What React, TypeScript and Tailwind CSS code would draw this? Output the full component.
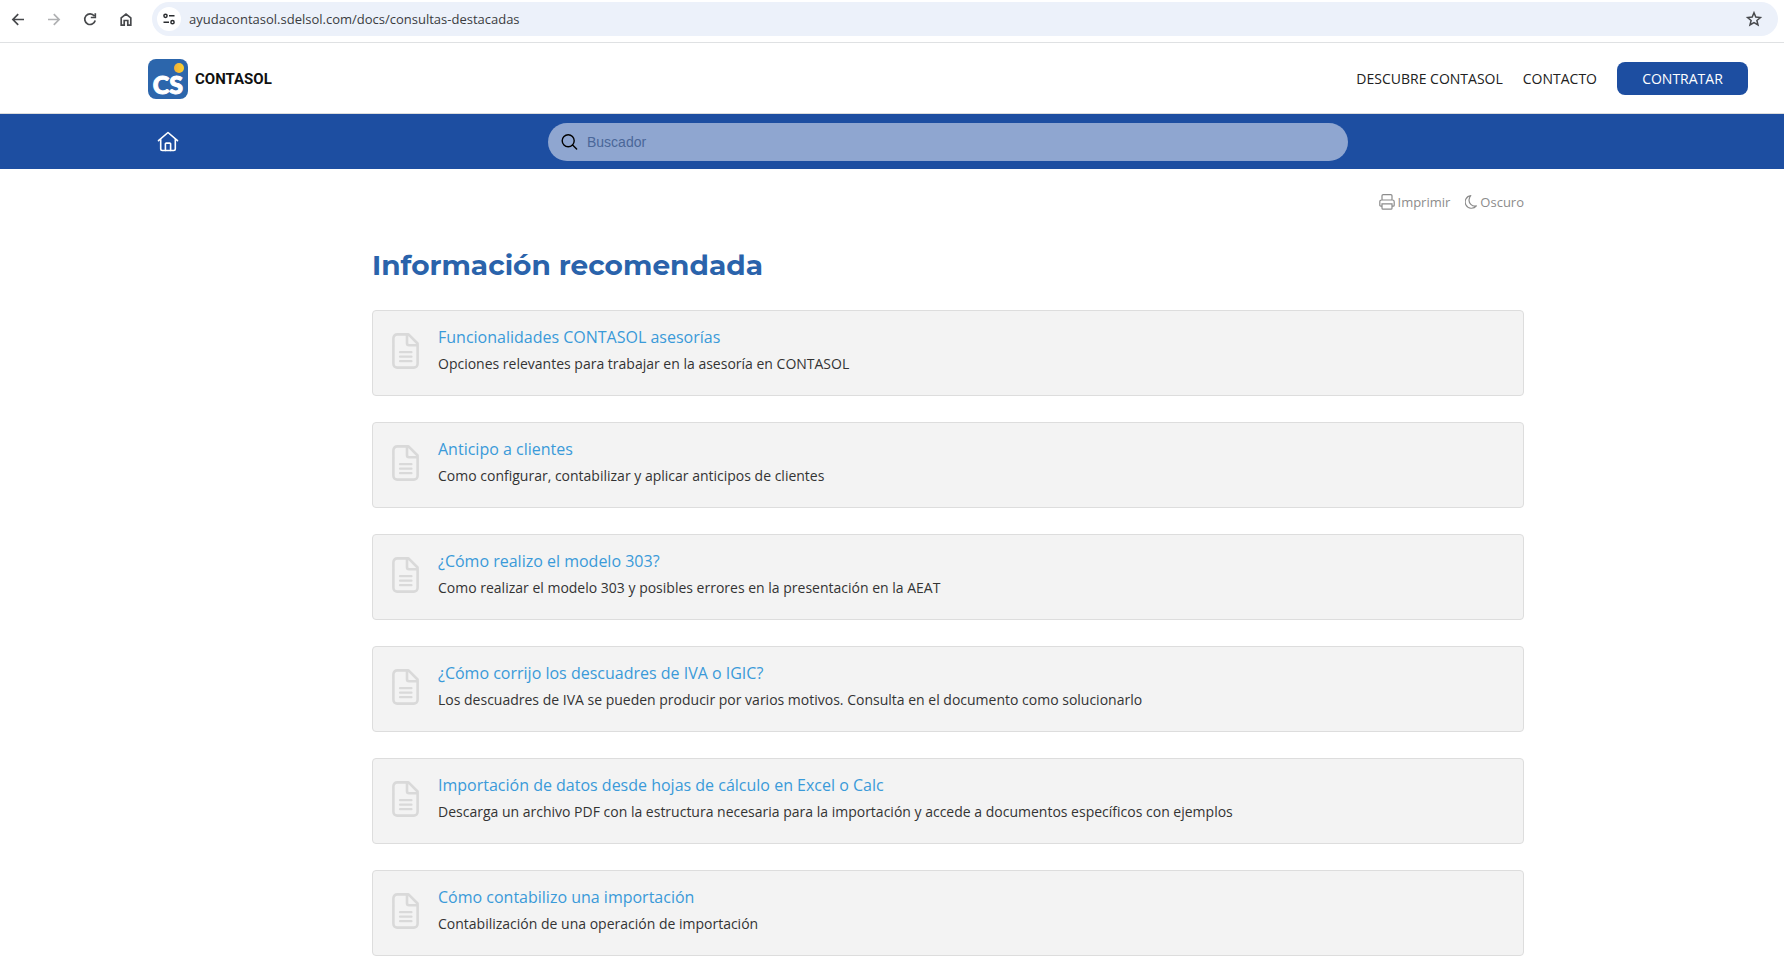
import React from "react";

interface DocItem {
  title: string;
  description: string;
}

const docs: DocItem[] = [
  {
    title: "Funcionalidades CONTASOL asesorías",
    description: "Opciones relevantes para trabajar en la asesoría en CONTASOL",
  },
  {
    title: "Anticipo a clientes",
    description: "Como configurar, contabilizar y aplicar anticipos de clientes",
  },
  {
    title: "¿Cómo realizo el modelo 303?",
    description: "Como realizar el modelo 303 y posibles errores en la presentación en la AEAT",
  },
  {
    title: "¿Cómo corrijo los descuadres de IVA o IGIC?",
    description:
      "Los descuadres de IVA se pueden producir por varios motivos. Consulta en el documento como solucionarlo",
  },
  {
    title: "Importación de datos desde hojas de cálculo en Excel o Calc",
    description:
      "Descarga un archivo PDF con la estructura necesaria para la importación y accede a documentos específicos con ejemplos",
  },
  {
    title: "Cómo contabilizo una importación",
    description: "Contabilización de una operación de importación",
  },
];

const BrowserBar: React.FC = () => {
  return (
    <div className="flex items-center border-b border-[#dfe1e3] pt-[2px] pb-[6px] pl-[9px] pr-[6px] text-[#47494c]">
      <div className="flex items-center gap-[18px] pr-[17px]">
        <button aria-label="Atrás">
          <svg width="18" height="18" viewBox="0 0 18 18" fill="none" stroke="currentColor" strokeWidth="1.7">
            <path d="M15 9.500H4M9.200 4.200 3.900 9.500l5.300 5.300" />
          </svg>
        </button>
        <button aria-label="Adelante" className="text-[#b0b1b3]">
          <svg width="18" height="18" viewBox="0 0 18 18" fill="none" stroke="currentColor" strokeWidth="1.7">
            <path d="M3 9.500h11M8.800 4.200l5.300 5.300-5.300 5.300" />
          </svg>
        </button>
        <button aria-label="Recargar">
          <svg width="18" height="18" viewBox="0 0 18 18" fill="none" stroke="currentColor" strokeWidth="1.7">
            <path d="M13.300 6A5.300 5.300 0 1 0 14.200 10.500M14.300 3.300V7.500H9.800" />
          </svg>
        </button>
        <button aria-label="Inicio">
          <svg width="18" height="18" viewBox="0 0 18 18" fill="none" stroke="currentColor" strokeWidth="1.7">
            <path d="M4.200 7.800 9 4.100l4.800 3.700v7.400h-3v-4.700H7.200v4.700h-3Z" />
          </svg>
        </button>
      </div>
      <div className="flex h-[34px] flex-1 items-center gap-2 rounded-full bg-[#ecf1fa] pl-[5px] pr-[15px]">
        <button
          aria-label="Información del sitio"
          className="flex size-6 items-center justify-center rounded-full bg-white text-[#2a2c2f]"
        >
          <svg width="14" height="14" viewBox="0 0 14 14" fill="none" stroke="currentColor" strokeWidth="1.5">
            <circle cx="3.500" cy="3.800" r="1.600" />
            <path d="M7 3.800h5.500M1.500 10.200h5.500" />
            <circle cx="10.500" cy="10.200" r="1.600" />
          </svg>
        </button>
        <input
          type="text"
          aria-label="Dirección"
          defaultValue="ayudacontasol.sdelsol.com/docs/consultas-destacadas"
          className="flex-1 bg-transparent pt-px font-['Open_Sans',sans-serif] text-[13px] text-[#3a3c3f] outline-none"
        />
        <button aria-label="Añadir a marcadores">
          <svg width="18" height="18" viewBox="0 0 18 18" fill="none" stroke="currentColor" strokeWidth="1.5">
            <path d="m9 2.800 1.800 4.300 4.600.4-3.500 3 1.100 4.500L9 12.600 5 15l1.100-4.500-3.500-3 4.600-.4Z" />
          </svg>
        </button>
      </div>
    </div>
  );
};

const Header: React.FC = () => {
  return (
    <header className="flex h-[71px] items-center justify-between border-b border-[#dcdcdc] pt-px pl-[148px] pr-9">
      <a href="#" className="flex items-center gap-[7px]">
        <span className="relative flex size-10 items-end justify-center rounded-lg bg-[#2c66ac]">
          <span className="font-['Lato',sans-serif] text-[25px] leading-[30px] font-black text-white [-webkit-text-stroke:1px_white]">
            CS
          </span>
          <span className="absolute top-1 right-1 size-[10px] rounded-full bg-gradient-to-r from-[#f0ae38] to-[#fad02f]" />
        </span>
        <span className="pt-[2px] font-['Roboto',sans-serif] text-[15px] font-bold text-[#111111]">CONTASOL</span>
      </a>
      <nav className="flex items-center gap-5 text-sm text-[#212121]">
        <a href="#">DESCUBRE CONTASOL</a>
        <a href="#">CONTACTO</a>
        <a
          href="#"
          className="flex h-[33px] w-[131px] items-center justify-center rounded-lg bg-[#1d4ea1] font-medium text-white"
        >
          CONTRATAR
        </a>
      </nav>
    </header>
  );
};

const SearchBar: React.FC = () => {
  return (
    <div className="grid h-[55px] grid-cols-[1fr_800px_1fr] items-center bg-[#1d4ea1] pl-[148px] pr-9">
      <a href="#" aria-label="Inicio" className="justify-self-start pl-[9px] text-white">
        <svg width="22" height="22" viewBox="0 0 22 22" fill="none" stroke="currentColor" strokeWidth="1.6" strokeLinejoin="round" strokeLinecap="round">
          <path d="M1.500 9.700 11 1.500l9.500 8.200M3.700 8.500v9.300a1.700 1.700 0 0 0 1.700 1.700h11.200a1.700 1.700 0 0 0 1.700-1.700V8.500" />
          <path d="M8.400 19.500V13a.9.9 0 0 1 .9-.9h3.400a.9.9 0 0 1 .9.9v6.500" />
        </svg>
      </a>
      <label className="flex h-[38px] items-center gap-[9px] rounded-full bg-[#8fa6d0] px-[13px] text-black">
        <svg width="17" height="17" viewBox="0 0 17 17" fill="none" stroke="currentColor" strokeWidth="1.400" strokeLinecap="round">
          <circle cx="7.200" cy="7.700" r="6" />
          <path d="m11.600 12.100 4 4" />
        </svg>
        <input
          type="text"
          aria-label="Buscador"
          placeholder="Buscador"
          className="flex-1 bg-transparent font-['Liberation_Sans',sans-serif] text-sm outline-none placeholder:text-[#4a6799]"
        />
      </label>
    </div>
  );
};

const DocCard: React.FC<DocItem> = ({ title, description }) => {
  return (
    <li className="flex h-[86px] rounded-[4px] border border-[#dddddd] bg-[#f3f3f3] pl-[19px]">
      <svg
        className="mt-[22px] mr-[19px] shrink-0 text-[#d9d9d9]"
        width="27"
        height="36"
        viewBox="0 0 27 36"
        fill="none"
        stroke="currentColor"
        strokeWidth="2.600"
        strokeLinejoin="round"
        strokeLinecap="round"
      >
        <path d="M5.100 1.400H16.500L25.600 10.500V30.800a3.800 3.800 0 0 1-3.800 3.800H5.200A3.800 3.800 0 0 1 1.400 30.800V5.200a3.800 3.800 0 0 1 3.800-3.800ZM15 1.500V10.200a2 2 0 0 0 2 2h8.500" />
        <path strokeWidth="2.200" d="M8 19.200h11.500M8 23.700h11.500M8 28.200h11.500" />
      </svg>
      <div className="pt-[14px]">
        <a href="#" className="block text-base leading-6 text-[#3a9ad9]">
          {title}
        </a>
        <p className="mt-[5px] text-sm leading-5 text-[#333333]">{description}</p>
      </div>
    </li>
  );
};

const App: React.FC = () => {
  return (
    <div className="bg-white font-['Open_Sans',sans-serif]">
      <BrowserBar />
      <Header />
      <SearchBar />
      <main className="pl-[148px] pr-9">
        <div className="mx-auto max-w-[1152px] pt-[23px] pb-[13px]">
          <div className="flex justify-end gap-[15px] text-[13px] leading-5 text-[#8c8c8c]">
            <button className="flex items-center gap-[3px]">
              <svg width="16" height="16" viewBox="0 0 16 16" fill="none" stroke="currentColor" strokeWidth="1.200">
                <path d="M3 6V1.800A1.200 1.200 0 0 1 4.200.6h7.600A1.200 1.200 0 0 1 13 1.800V6M3 12.200H1.800a1 1 0 0 1-1-1V7.700A1.700 1.700 0 0 1 2.500 6h11a1.700 1.700 0 0 1 1.700 1.700v3.500a1 1 0 0 1-1 1H13M3 9.800h10v4.400a1 1 0 0 1-1 1H4a1 1 0 0 1-1-1Z" />
              </svg>
              Imprimir
            </button>
            <button className="flex items-center gap-[3px]">
              <svg width="12" height="14" viewBox="0 0 12 14" fill="none" stroke="currentColor" strokeWidth="1.200" strokeLinejoin="round">
                <path d="M5.800.7a6.300 6.300 0 1 0 5.600 10.200C7 11.900 3.300 8 4.200 4.100 4.500 2.600 5 1.500 5.800.7Z" />
              </svg>
              Oscuro
            </button>
          </div>
          <h1 className="mt-[33px] font-['Montserrat','Inter',sans-serif] text-[28px] leading-10 font-bold text-[#2a63ab]">
            Información recomendada
          </h1>
          <ul className="mt-[25px] flex flex-col gap-[26px]">
            {docs.map((doc) => (
              <DocCard key={doc.title} title={doc.title} description={doc.description} />
            ))}
          </ul>
        </div>
      </main>
    </div>
  );
};

export default App;
